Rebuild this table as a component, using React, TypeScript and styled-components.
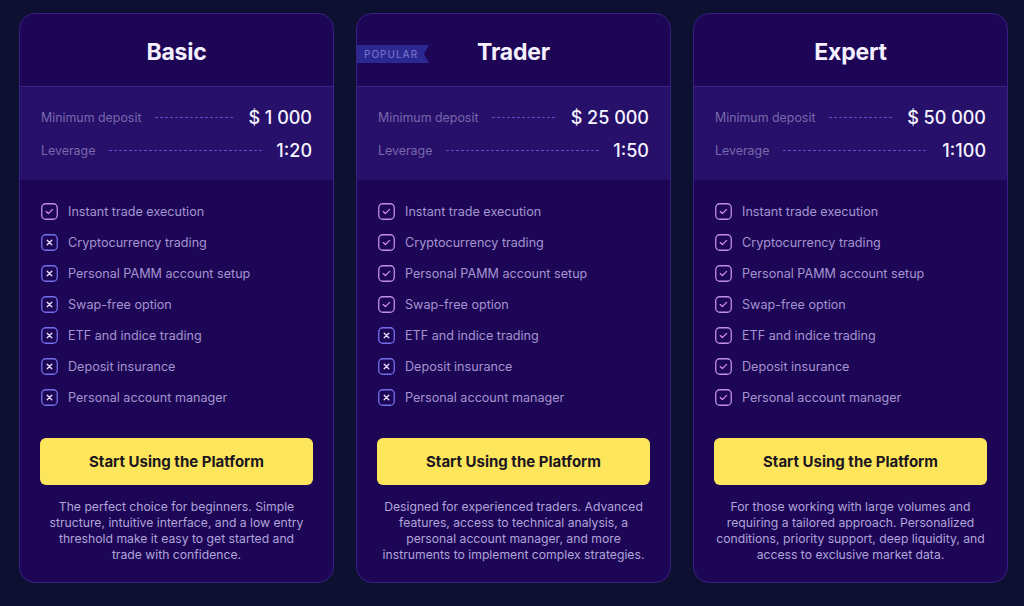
import React from 'react';
import styled, { createGlobalStyle } from 'styled-components';

const GlobalStyle = createGlobalStyle`
  html, body {
    margin: 0;
    padding: 0;
    background: #0e1032;
    font-family: Inter, "Noto Sans", "DejaVu Sans", sans-serif;
  }
`;

const Page = styled.div`
  width: 1024px;
  height: 606px;
  box-sizing: border-box;
  padding: 13px 18px 0 19px;
  display: grid;
  grid-template-columns: repeat(3, 315px);
  column-gap: 22px;
  align-items: start;
`;

const Card = styled.div`
  position: relative;
  height: 570px;
  box-sizing: border-box;
  background: #1e0656;
  border: 1px solid #372182;
  border-radius: 16px;
  overflow: hidden;
  display: flex;
  flex-direction: column;
`;

const Header = styled.div`
  height: 72px;
  display: flex;
  align-items: center;
  justify-content: center;
  border-bottom: 1px solid #3a2487;
`;

const Title = styled.h2`
  margin: 0;
  font-size: 23px;
  font-weight: 700;
  color: #f4f0ff;
  letter-spacing: -0.2px;
  transform: translateY(2px);
`;

const Badge = styled.span`
  position: absolute;
  left: 0;
  top: 31px;
  height: 18px;
  width: 72px;
  box-sizing: border-box;
  padding-left: 7px;
  display: flex;
  align-items: center;
  background: #2c2891;
  clip-path: polygon(0 0, 100% 0, 93% 50%, 100% 100%, 0 100%);
  font-size: 10px;
  letter-spacing: 1px;
  color: #716dc9;
  font-weight: 500;
`;

const Stats = styled.div`
  background: #26106a;
  padding: 19px 21px;
  display: flex;
  flex-direction: column;
  gap: 11px;
`;

const StatRow = styled.div`
  height: 22px;
  display: flex;
  align-items: center;
`;

const StatLabel = styled.span`
  font-size: 12.4px;
  color: #7868ac;
`;

const Dots = styled.span`
  flex: 1;
  height: 1px;
  margin: 0 14px;
  background: repeating-linear-gradient(90deg, #5a4fcf 0 3px, transparent 3px 5px);
`;

const StatValue = styled.span`
  font-size: 18px;
  color: #f6f3ff;
  font-weight: 500;
`;

const Features = styled.ul`
  list-style: none;
  margin: 0;
  padding: 22px 21px 0;
  display: flex;
  flex-direction: column;
  gap: 13px;
`;

const Feature = styled.li`
  height: 18px;
  display: flex;
  align-items: center;
  gap: 10px;
  font-size: 12.6px;
  color: #a494d0;
`;

const Button = styled.button`
  margin: 32px 20px 0;
  height: 47px;
  border: none;
  border-radius: 6px;
  background: #fde65c;
  color: #1c1620;
  font-family: inherit;
  font-size: 15px;
  font-weight: 700;
  cursor: pointer;
`;

const Description = styled.p<{ $inset: number }>`
  margin: 14px ${(p) => p.$inset}px 0;
  text-align: center;
  font-size: 12.2px;
  line-height: 16px;
  color: #b0a4da;
`;

const Box: React.FC<{ on: boolean }> = ({ on }) =>
  on ? (
    <svg width="17" height="17" viewBox="0 0 17 17" fill="none">
      <rect x="0.75" y="0.75" width="15.5" height="15.5" rx="4" stroke="#c18fe8" strokeWidth="1.3" />
      <path d="M5.2 8.6 L7.4 10.6 L11.6 6.4" stroke="#d58bf0" strokeWidth="1.3" strokeLinecap="round" strokeLinejoin="round" />
    </svg>
  ) : (
    <svg width="17" height="17" viewBox="0 0 17 17" fill="none">
      <rect x="0.75" y="0.75" width="15.5" height="15.5" rx="4" stroke="#7470ec" strokeWidth="1.3" />
      <path d="M6.2 6.2 L10.8 10.8 M10.8 6.2 L6.2 10.8" stroke="#e6e2ff" strokeWidth="1.3" strokeLinecap="round" />
    </svg>
  );

const featureNames = [
  'Instant trade execution',
  'Cryptocurrency trading',
  'Personal PAMM account setup',
  'Swap-free option',
  'ETF and indice trading',
  'Deposit insurance',
  'Personal account manager',
];

const plans = [
  {
    name: 'Basic',
    deposit: '$ 1 000',
    leverage: '1:20',
    enabled: 1,
    popular: false,
    inset: 24,
    text: 'The perfect choice for beginners. Simple structure, intuitive interface, and a low entry threshold make it easy to get started and trade with confidence.',
  },
  {
    name: 'Trader',
    deposit: '$ 25 000',
    leverage: '1:50',
    enabled: 4,
    popular: true,
    inset: 22,
    text: 'Designed for experienced traders. Advanced features, access to technical analysis, a personal account manager, and more instruments to implement complex strategies.',
  },
  {
    name: 'Expert',
    deposit: '$ 50 000',
    leverage: '1:100',
    enabled: 7,
    popular: false,
    inset: 20,
    text: 'For those working with large volumes and requiring a tailored approach. Personalized conditions, priority support, deep liquidity, and access to exclusive market data.',
  },
];

export default function App() {
  return (
    <>
      <GlobalStyle />
      <Page>
        {plans.map((p) => (
          <Card key={p.name}>
            {p.popular && <Badge>POPULAR</Badge>}
            <Header>
              <Title>{p.name}</Title>
            </Header>
            <Stats>
              <StatRow>
                <StatLabel>Minimum deposit</StatLabel>
                <Dots />
                <StatValue>{p.deposit}</StatValue>
              </StatRow>
              <StatRow>
                <StatLabel>Leverage</StatLabel>
                <Dots />
                <StatValue>{p.leverage}</StatValue>
              </StatRow>
            </Stats>
            <Features>
              {featureNames.map((f, i) => (
                <Feature key={f}>
                  <Box on={i < p.enabled} />
                  {f}
                </Feature>
              ))}
            </Features>
            <Button>Start Using the Platform</Button>
            <Description $inset={p.inset}>{p.text}</Description>
          </Card>
        ))}
      </Page>
    </>
  );
}
